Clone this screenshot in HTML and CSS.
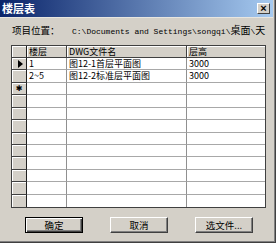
FILE: index.html
```html
<!DOCTYPE html>
<html>
<head>
    <title>楼层表</title>
    <link rel="stylesheet" href="styles.css">
</head>
<body>
    <div class="dlg">
        <div class="title">
            <span class="title-text">楼层表</span>
            <span class="close">×</span>
        </div>

        <div class="path-row">
            <span class="lbl">项目位置：</span>
            <span class="path">C:\Documents and Settings\songqi\<span class="cjk">桌面</span>\<span class="cjk">天</span></span>
        </div>

        <div class="grid">
            <div class="sel hd"></div>
            <div class="hd">楼层</div>
            <div class="hd">DWG文件名</div>
            <div class="hd last">层高</div>

            <div class="sel"><span class="arrow"></span></div>
            <div class="c">1</div>
            <div class="c">图12-1首层平面图</div>
            <div class="c last">3000</div>

            <div class="sel"></div>
            <div class="c">2~5</div>
            <div class="c">图12-2标准层平面图</div>
            <div class="c last">3000</div>

            <div class="sel star">✱</div>
            <div class="c"></div>
            <div class="c"></div>
            <div class="c last"></div>

            <div class="sel"></div><div class="c"></div><div class="c"></div><div class="c last"></div>
            <div class="sel"></div><div class="c"></div><div class="c"></div><div class="c last"></div>
            <div class="sel"></div><div class="c"></div><div class="c"></div><div class="c last"></div>
            <div class="sel"></div><div class="c"></div><div class="c"></div><div class="c last"></div>
            <div class="sel"></div><div class="c"></div><div class="c"></div><div class="c last"></div>
            <div class="sel"></div><div class="c"></div><div class="c"></div><div class="c last"></div>
            <div class="sel"></div><div class="c"></div><div class="c"></div><div class="c last"></div>
            <div class="sel"></div><div class="c"></div><div class="c"></div><div class="c last"></div>
            <div class="sel end"></div><div class="c end"></div><div class="c end"></div><div class="c last end"></div>
        </div>

        <div class="buttons">
            <span class="btn default">确定</span>
            <span class="btn">取消</span>
            <span class="btn">选文件...</span>
        </div>
    </div>
</body>
</html>
```

FILE: styles.css
```css
body {
    margin: 0;
    width: 276px;
    height: 243px;
    overflow: hidden;
    background-color: #d4d0c8;
    font-family: "Noto Sans CJK SC", "Liberation Sans", sans-serif;
    font-size: 9px;
    color: #000000;
}

.dlg {
    box-sizing: border-box;
    width: 276px;
    height: 243px;
    border-right: 1px solid #404040;
    border-bottom: 1px solid #404040;
    box-shadow: inset -1px -1px #808080;
    padding-right: 2px;
}

.title {
    height: 17px;
    display: flex;
    align-items: center;
    justify-content: space-between;
    padding: 0 3px 0 2px;
    background: linear-gradient(to right, #0a246a, #a6caf0);
    border-bottom: 1px solid #e8e6e0;
}

.title-text {
    color: #ffffff;
    font-weight: bold;
    font-size: 11px;
    line-height: 13px;
}

.close {
    box-sizing: border-box;
    width: 13px;
    height: 11px;
    background-color: #d4d0c8;
    border-top: 1px solid #ffffff;
    border-left: 1px solid #ffffff;
    border-right: 1px solid #404040;
    border-bottom: 1px solid #404040;
    font-family: "Liberation Sans", sans-serif;
    font-weight: bold;
    font-size: 11px;
    line-height: 9px;
    text-align: center;
}

.path-row {
    display: flex;
    align-items: center;
    height: 13px;
    margin: 6px 0 0 12px;
    white-space: nowrap;
}

.lbl {
    width: 60px;
    font-size: 9.5px;
    line-height: 13px;
}

.path {
    font-family: "Liberation Mono", "Noto Sans CJK SC", monospace;
    font-size: 8px;
    line-height: 13px;
}

.path .cjk {
    font-family: "Noto Sans CJK SC", sans-serif;
    font-size: 10px;
}

.grid {
    box-sizing: border-box;
    margin: 8px 0 0 11px;
    width: 255px;
    height: 163px;
    border: 1px solid #404040;
    background-color: #ffffff;
    display: grid;
    grid-template-columns: 15px 40px 120px 1fr;
    grid-template-rows: 12px repeat(12, 1fr);
}

.grid > div {
    box-sizing: border-box;
    padding-left: 2px;
    line-height: 11px;
    white-space: nowrap;
    overflow: hidden;
}

.hd {
    background-color: #d4d0c8;
    border-right: 1px solid #404040;
    border-bottom: 1px solid #404040;
    box-shadow: inset 1px 1px #ffffff;
}

.sel {
    background-color: #d4d0c8;
    border-right: 1px solid #202020;
    border-bottom: 1px solid #404040;
    box-shadow: inset 1px 1px #ffffff;
    display: flex;
    align-items: center;
    justify-content: center;
}

.c {
    border-right: 1px solid #909090;
    border-bottom: 1px solid #a8a8a8;
}

.grid > .last {
    border-right: none;
}

.grid > .end {
    border-bottom: none;
}

.arrow {
    width: 0;
    height: 0;
    border-top: 4px solid transparent;
    border-bottom: 4px solid transparent;
    border-left: 5px solid #000000;
}

.grid > .star {
    padding-left: 0;
    font-family: "DejaVu Sans", sans-serif;
    font-size: 8px;
}

.buttons {
    display: flex;
    gap: 27px;
    margin: 9px 0 0 25px;
}

.btn {
    box-sizing: border-box;
    width: 58px;
    height: 16px;
    display: flex;
    align-items: center;
    justify-content: center;
    background-color: #d4d0c8;
    border-top: 1px solid #ffffff;
    border-left: 1px solid #ffffff;
    border-right: 1px solid #404040;
    border-bottom: 1px solid #404040;
    box-shadow: inset -1px -1px #808080;
    font-size: 9.5px;
}

.btn.default {
    border: 1px solid #000000;
    box-shadow: inset 1px 1px #ffffff, inset -1px -1px #404040, inset -2px -2px #808080;
}
```
